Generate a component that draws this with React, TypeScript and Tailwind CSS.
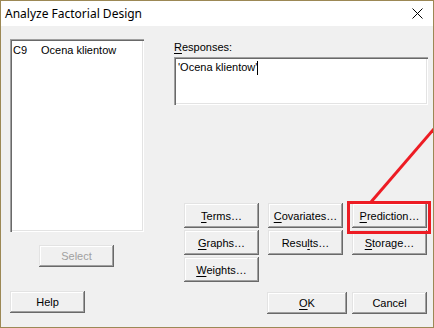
import React from "react";

const btnBase =
  "flex items-center justify-center bg-[#f0f0f0] text-[11px] shadow-[inset_-1px_-1px_0_#696969,inset_1px_1px_0_#e3e3e3,inset_-2px_-2px_0_#a0a0a0,inset_2px_2px_0_#ffffff]";

function Btn({
  children,
  w = "w-[75px]",
  h = "h-[25px]",
  disabled = false,
}: {
  children: React.ReactNode;
  w?: string;
  h?: string;
  disabled?: boolean;
}) {
  return (
    <div className={`${btnBase} ${w} ${h} ${disabled ? "text-[#a0a0a0]" : "text-black"}`}>
      <span className="leading-none pt-px">{children}</span>
    </div>
  );
}

function U({ children }: { children: React.ReactNode }) {
  return <span className="underline underline-offset-[2px]">{children}</span>;
}

export default function App() {
  return (
    <div
      className="relative w-[434px] h-[328px] border border-[#9c8855] flex flex-col overflow-hidden"
      style={{ fontFamily: '"Liberation Sans", Arial, sans-serif' }}
    >
      {/* title bar */}
      <div className="h-[25px] bg-white flex items-center justify-between pl-[4px] pr-[10px] shrink-0">
        <span
          className="text-[12px] text-black"
          style={{ fontFamily: '"Noto Sans", sans-serif' }}
        >
          Analyze Factorial Design
        </span>
        <svg width="11" height="11" viewBox="0 0 11 11">
          <path d="M0.5 0.5 L10.5 10.5 M10.5 0.5 L0.5 10.5" stroke="#000" strokeWidth="1" />
        </svg>
      </div>

      {/* body */}
      <div className="flex-1 bg-[#f0f0f0] flex">
        {/* left column */}
        <div className="flex flex-col pl-[9px] pt-[13px] w-[173px] shrink-0">
          <div className="w-[134px] h-[193px] bg-white shadow-[inset_1px_1px_0_#a0a0a0,inset_2px_2px_0_#696969,inset_-1px_-1px_0_#ffffff,inset_-2px_-2px_0_#e3e3e3] pt-[5px] pl-[3px] flex text-[11px] text-black leading-[13px]">
            <span className="w-[28px]">C9</span>
            <span>Ocena klientow</span>
          </div>
          <div className="mt-[13px] ml-[29px]">
            <Btn h="h-[22px]" disabled>
              Select
            </Btn>
          </div>
          <div className="mt-[24px]">
            <Btn h="h-[22px]">Help</Btn>
          </div>
        </div>

        {/* right column */}
        <div className="flex flex-col">
          <div className="mt-[15px] text-[11px] leading-[13px] text-black">
            <U>R</U>esponses:
          </div>
          <div className="mt-[3px] w-[254px] h-[48px] bg-white shadow-[inset_1px_1px_0_#a0a0a0,inset_2px_2px_0_#696969,inset_-1px_-1px_0_#ffffff,inset_-2px_-2px_0_#e3e3e3] pl-[4px] pt-[4px] text-[11px] leading-[13px] text-black flex items-start">
            <span>'Ocena klientow'</span>
            <span className="w-px h-[14px] bg-black" />
          </div>

          <div className="mt-[98px] ml-[10px] grid grid-cols-[75px_75px_75px] gap-x-[9px] gap-y-[2px]">
            <Btn>
              <U>T</U>erms…
            </Btn>
            <Btn>
              <U>C</U>ovariates…
            </Btn>
            <div className="relative">
              <Btn>
                <U>P</U>rediction…
              </Btn>
              <div className="absolute left-[-5px] right-[-4px] top-[-2px] bottom-[-6px] border-[3px] border-[#ed1c24]" />
            </div>
            <Btn>
              <U>G</U>raphs…
            </Btn>
            <Btn>
              Resu<U>l</U>ts…
            </Btn>
            <Btn>
              <U>S</U>torage…
            </Btn>
            <Btn>
              <U>W</U>eights…
            </Btn>
          </div>

          <div className="mt-[10px] ml-[93px] flex gap-[5px]">
            <Btn w="w-[80px]" h="h-[22px]">
              <U>O</U>K
            </Btn>
            <Btn h="h-[22px]">Cancel</Btn>
          </div>
        </div>
      </div>

      {/* red arrow line */}
      <svg
        className="absolute left-0 top-0 pointer-events-none"
        width="434"
        height="328"
        viewBox="0 0 434 328"
      >
        <line x1="370" y1="201" x2="438" y2="122" stroke="#ed1c24" strokeWidth="3" />
      </svg>
    </div>
  );
}
